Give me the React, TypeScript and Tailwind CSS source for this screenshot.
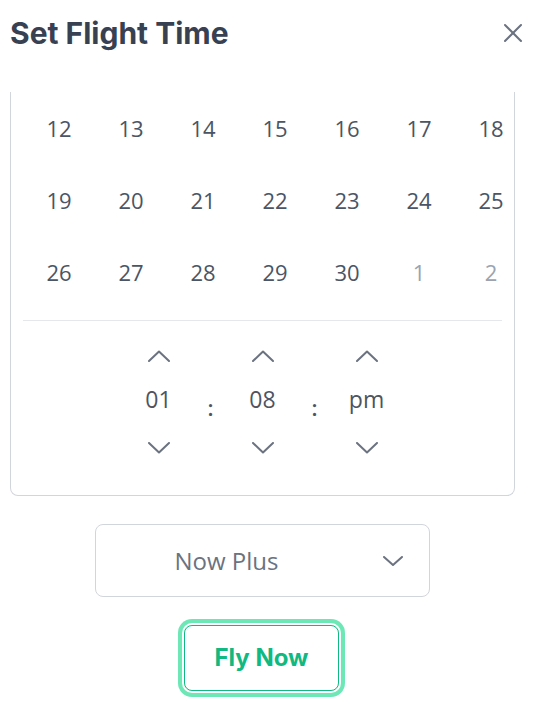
import { useState } from "react";

const weeks = [
  [12, 13, 14, 15, 16, 17, 18],
  [19, 20, 21, 22, 23, 24, 25],
  [26, 27, 28, 29, 30, 1, 2],
];

function Chevron({ up = false }: { up?: boolean }) {
  return (
    <svg width="22" height="12" viewBox="0 0 22 12" fill="none" stroke="#6b7280" strokeWidth="2" strokeLinecap="round" strokeLinejoin="round">
      {up ? <polyline points="1,11 11,1.5 21,11" /> : <polyline points="1,1 11,10.5 21,1" />}
    </svg>
  );
}

function TimeColumn({ value }: { value: string }) {
  return (
    <div className="flex w-[60px] flex-col items-center">
      <button className="flex h-[30px] items-center justify-center">
        <Chevron up />
      </button>
      <div className="flex h-[56px] items-center text-[23px] text-[#4b5563]">{value}</div>
      <button className="mt-[6px] flex h-[30px] items-center justify-center">
        <Chevron />
      </button>
    </div>
  );
}

export default function App() {
  const [hour] = useState("01");
  const [minute] = useState("08");
  const [period] = useState("pm");

  return (
    <div className="h-[709px] w-[539px] bg-white px-[10px] font-['Open_Sans',sans-serif]">
      {/* header */}
      <div className="flex h-[66px] items-center justify-between">
        <h1 className="font-['Inter',sans-serif] text-[30px] font-bold text-[#374151]">Set Flight Time</h1>
        <button className="mr-[6px]">
          <svg width="20" height="20" viewBox="0 0 20 20" fill="none" stroke="#6b7280" strokeWidth="2" strokeLinecap="round">
            <line x1="2" y1="2" x2="18" y2="18" />
            <line x1="18" y1="2" x2="2" y2="18" />
          </svg>
        </button>
      </div>

      {/* calendar card, top scrolled out of view */}
      <div className="mt-[26px] w-[505px] rounded-b-lg border border-t-0 border-gray-300 px-3 pb-[32px]">
        <div className="grid grid-cols-[repeat(7,72px)]">
          {weeks.flat().map((d, i) => (
            <div
              key={i}
              className={`flex h-[72px] items-center justify-center text-[22px] ${i >= 19 ? "text-[#9ca3af]" : "text-[#4b5563]"}`}
            >
              {d}
            </div>
          ))}
        </div>
        <div className="mt-[12px] border-t border-gray-200" />
        <div className="mt-[20px] flex items-center justify-center">
          <TimeColumn value={hour} />
          <div className="w-[44px] pt-[10px] text-center text-[22px] font-semibold text-[#4b5563]">:</div>
          <TimeColumn value={minute} />
          <div className="w-[44px] pt-[10px] text-center text-[22px] font-semibold text-[#4b5563]">:</div>
          <TimeColumn value={period} />
        </div>
      </div>

      {/* select */}
      <div className="mt-[28px] flex justify-center pr-[14px]">
        <button className="relative flex h-[73px] w-[335px] items-center justify-center rounded-lg border border-gray-300 bg-white pr-[72px] text-[24px] text-[#6b7280]">
          Now Plus
          <span className="absolute right-[26px] top-[31px]">
            <svg width="20" height="10" viewBox="0 0 20 10" fill="none" stroke="#6b7280" strokeWidth="2" strokeLinecap="round" strokeLinejoin="round">
              <polyline points="1,1 10,9 19,1" />
            </svg>
          </span>
        </button>
      </div>

      {/* fly now */}
      <div className="mt-[28px] flex justify-center pr-[16px]">
        <button className="h-[66px] w-[155px] rounded-lg border border-[#10b981] font-['Inter',sans-serif] text-[24px] font-bold text-[#10b981] ring-4 ring-[#6ee7b7] ring-offset-2">
          Fly Now
        </button>
      </div>
    </div>
  );
}
